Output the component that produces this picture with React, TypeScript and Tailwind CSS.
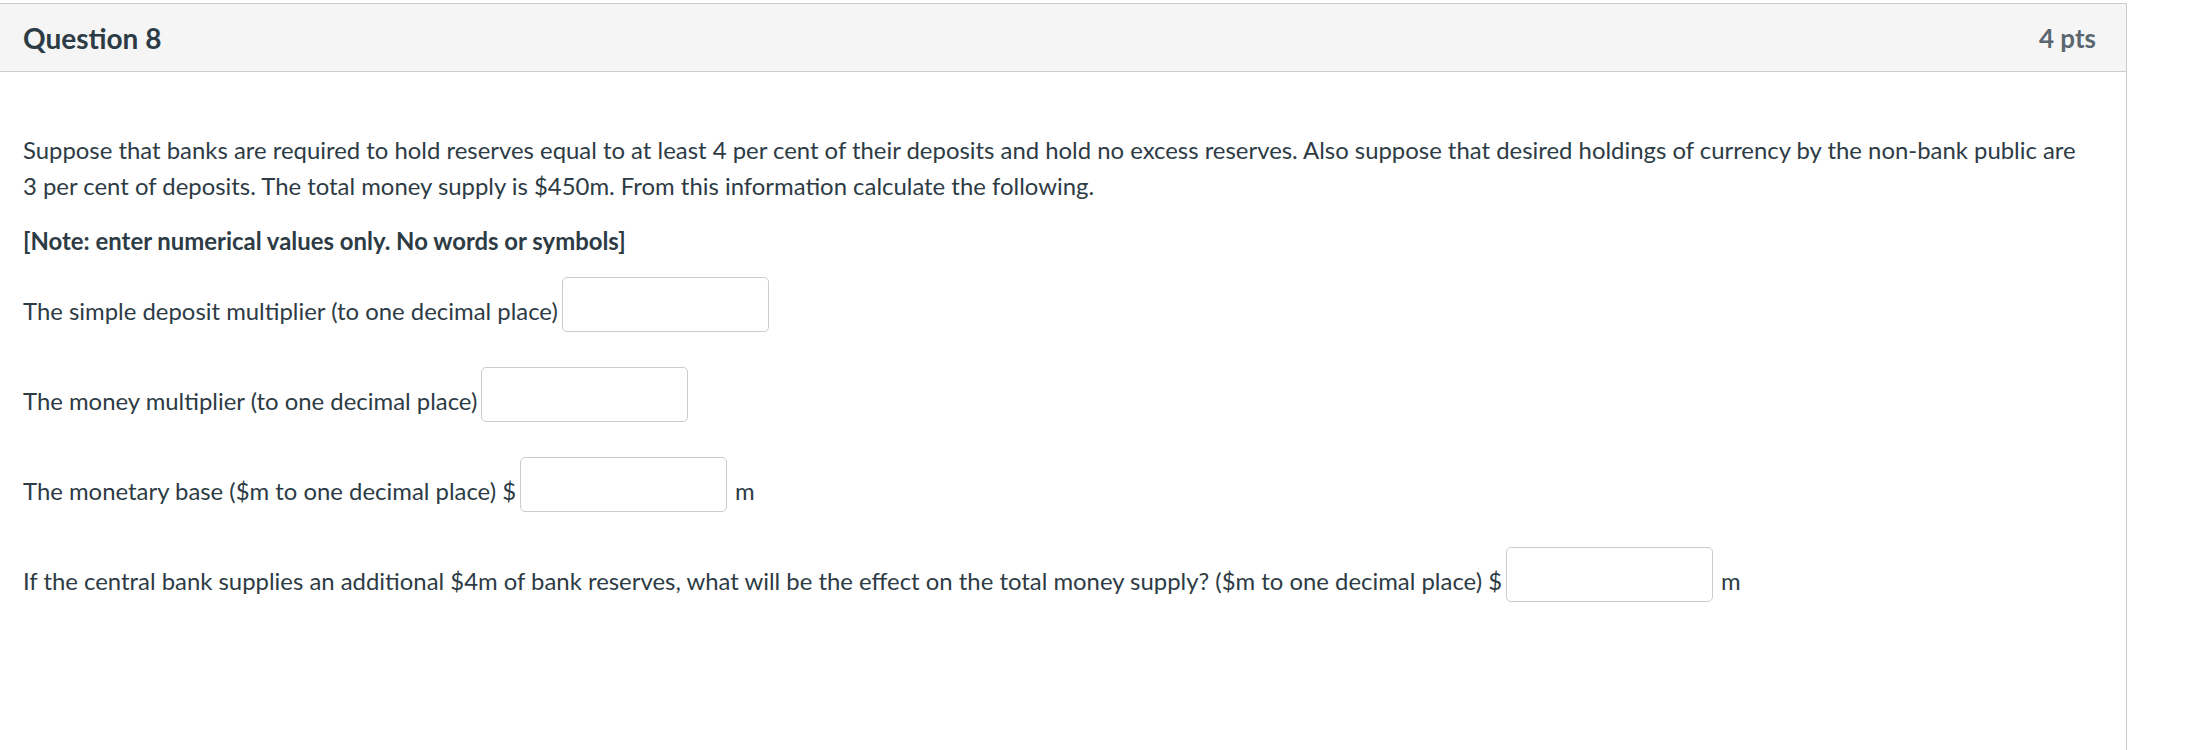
const rows = [
	{ id: 1, label: "The simple deposit multiplier (to one decimal place)", unit: "" },
	{ id: 2, label: "The money multiplier (to one decimal place)", unit: "" },
	{ id: 3, label: "The monetary base ($m to one decimal place) $", unit: "m" },
	{
		id: 4,
		label:
			"If the central bank supplies an additional $4m of bank reserves, what will be the effect on the total money supply? ($m to one decimal place) $",
		unit: "m",
	},
];

export default function App() {
	return (
		<main className="min-h-[750px] bg-white pt-[3px] font-['Lato','Open_Sans',sans-serif] text-[#2d3b45]">
			<div className="h-[747px] w-[2127px] border-t border-r border-[#c7cdd1]">
				<header className="flex h-[68px] items-center justify-between border-b border-[#c7cdd1] bg-[#f5f5f5] pl-[23px] pr-[30px]">
					<h2 className="text-[28px] font-bold leading-none">Question 8</h2>
					<span className="text-[26px] font-bold leading-none text-[#5b6770]">4 pts</span>
				</header>

				<section className="pl-[23px] pr-[36px] pt-[60px] text-[23.9px] leading-[36px]">
					<p>
						Suppose that banks are required to hold reserves equal to at least 4 per cent of their deposits and
						hold no excess reserves. Also suppose that desired holdings of currency by the non-bank public are 3
						per cent of deposits. The total money supply is $450m. From this information calculate the following.
					</p>
					<p className="mt-[19px] font-bold">[Note: enter numerical values only. No words or symbols]</p>

					<div className="mt-[18px] flex flex-col gap-[35px]">
						{rows.map((row) => (
							<div key={row.id} className="flex items-end">
								<span className="mb-[3px] whitespace-nowrap">{row.label}</span>
								<input
									type="text"
									className="ml-[4px] h-[55px] w-[207px] rounded-[5px] border border-[#c7cdd1] bg-white px-2 outline-none"
								/>
								{row.unit && <span className="mb-[3px] ml-[8px]">{row.unit}</span>}
							</div>
						))}
					</div>
				</section>
			</div>
		</main>
	);
}
